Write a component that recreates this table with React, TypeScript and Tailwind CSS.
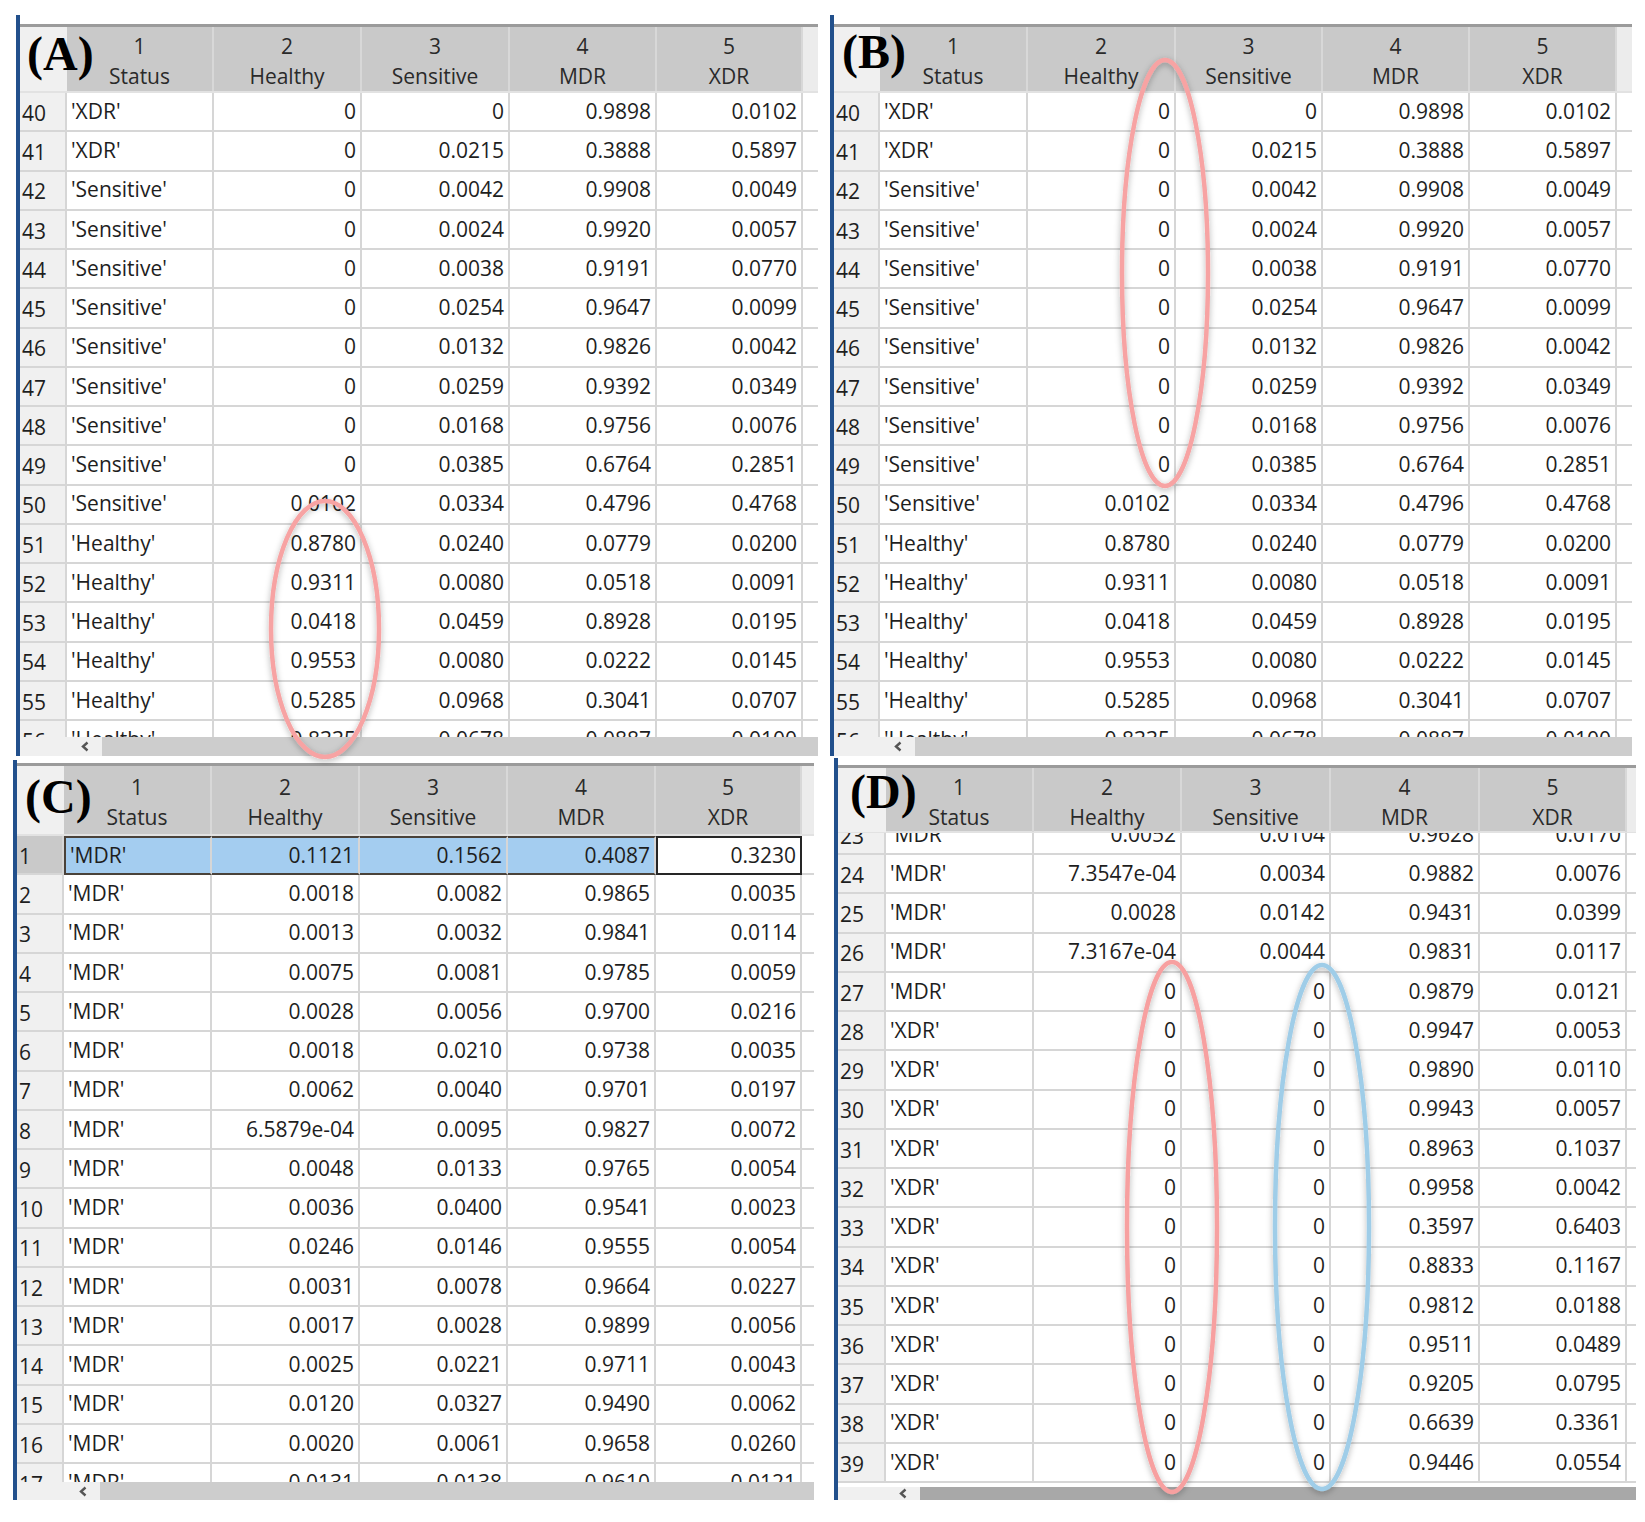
import React from "react";

type Row = string[];

const TOP_ROWS: Row[] = [
  ["40", "'XDR'", "0", "0", "0.9898", "0.0102"],
  ["41", "'XDR'", "0", "0.0215", "0.3888", "0.5897"],
  ["42", "'Sensitive'", "0", "0.0042", "0.9908", "0.0049"],
  ["43", "'Sensitive'", "0", "0.0024", "0.9920", "0.0057"],
  ["44", "'Sensitive'", "0", "0.0038", "0.9191", "0.0770"],
  ["45", "'Sensitive'", "0", "0.0254", "0.9647", "0.0099"],
  ["46", "'Sensitive'", "0", "0.0132", "0.9826", "0.0042"],
  ["47", "'Sensitive'", "0", "0.0259", "0.9392", "0.0349"],
  ["48", "'Sensitive'", "0", "0.0168", "0.9756", "0.0076"],
  ["49", "'Sensitive'", "0", "0.0385", "0.6764", "0.2851"],
  ["50", "'Sensitive'", "0.0102", "0.0334", "0.4796", "0.4768"],
  ["51", "'Healthy'", "0.8780", "0.0240", "0.0779", "0.0200"],
  ["52", "'Healthy'", "0.9311", "0.0080", "0.0518", "0.0091"],
  ["53", "'Healthy'", "0.0418", "0.0459", "0.8928", "0.0195"],
  ["54", "'Healthy'", "0.9553", "0.0080", "0.0222", "0.0145"],
  ["55", "'Healthy'", "0.5285", "0.0968", "0.3041", "0.0707"],
  ["56", "'Healthy'", "0.8335", "0.0678", "0.0887", "0.0100"],
];

const C_ROWS: Row[] = [
  ["1", "'MDR'", "0.1121", "0.1562", "0.4087", "0.3230"],
  ["2", "'MDR'", "0.0018", "0.0082", "0.9865", "0.0035"],
  ["3", "'MDR'", "0.0013", "0.0032", "0.9841", "0.0114"],
  ["4", "'MDR'", "0.0075", "0.0081", "0.9785", "0.0059"],
  ["5", "'MDR'", "0.0028", "0.0056", "0.9700", "0.0216"],
  ["6", "'MDR'", "0.0018", "0.0210", "0.9738", "0.0035"],
  ["7", "'MDR'", "0.0062", "0.0040", "0.9701", "0.0197"],
  ["8", "'MDR'", "6.5879e-04", "0.0095", "0.9827", "0.0072"],
  ["9", "'MDR'", "0.0048", "0.0133", "0.9765", "0.0054"],
  ["10", "'MDR'", "0.0036", "0.0400", "0.9541", "0.0023"],
  ["11", "'MDR'", "0.0246", "0.0146", "0.9555", "0.0054"],
  ["12", "'MDR'", "0.0031", "0.0078", "0.9664", "0.0227"],
  ["13", "'MDR'", "0.0017", "0.0028", "0.9899", "0.0056"],
  ["14", "'MDR'", "0.0025", "0.0221", "0.9711", "0.0043"],
  ["15", "'MDR'", "0.0120", "0.0327", "0.9490", "0.0062"],
  ["16", "'MDR'", "0.0020", "0.0061", "0.9658", "0.0260"],
  ["17", "'MDR'", "0.0131", "0.0138", "0.9610", "0.0121"],
];

const D_ROWS: Row[] = [
  ["23", "'MDR'", "0.0052", "0.0104", "0.9628", "0.0170"],
  ["24", "'MDR'", "7.3547e-04", "0.0034", "0.9882", "0.0076"],
  ["25", "'MDR'", "0.0028", "0.0142", "0.9431", "0.0399"],
  ["26", "'MDR'", "7.3167e-04", "0.0044", "0.9831", "0.0117"],
  ["27", "'MDR'", "0", "0", "0.9879", "0.0121"],
  ["28", "'XDR'", "0", "0", "0.9947", "0.0053"],
  ["29", "'XDR'", "0", "0", "0.9890", "0.0110"],
  ["30", "'XDR'", "0", "0", "0.9943", "0.0057"],
  ["31", "'XDR'", "0", "0", "0.8963", "0.1037"],
  ["32", "'XDR'", "0", "0", "0.9958", "0.0042"],
  ["33", "'XDR'", "0", "0", "0.3597", "0.6403"],
  ["34", "'XDR'", "0", "0", "0.8833", "0.1167"],
  ["35", "'XDR'", "0", "0", "0.9812", "0.0188"],
  ["36", "'XDR'", "0", "0", "0.9511", "0.0489"],
  ["37", "'XDR'", "0", "0", "0.9205", "0.0795"],
  ["38", "'XDR'", "0", "0", "0.6639", "0.3361"],
  ["39", "'XDR'", "0", "0", "0.9446", "0.0554"],
];

const HEADS = [
  ["1", "Status"],
  ["2", "Healthy"],
  ["3", "Sensitive"],
  ["4", "MDR"],
  ["5", "XDR"],
];

type PanelProps = {
  label: string;
  cols: string;
  rows: Row[];
  outer: string;
  pad: string;
  headH: string;
  labelPos: string;
  bodyH: string;
  shiftFirst?: boolean;
  selected?: number;
  barLeft: string;
  barH: string;
  thumb: string;
  barGap?: string;
};

function Panel(p: PanelProps) {
  return (
    <div className={"flex " + p.outer}>
      <div className="w-[4px] bg-[#22508c]" />
      <div className={p.pad}>
        <div className="h-[3px] bg-[#9b9b9b]" />

        {/* Column header */}
        <div className={"relative grid border-b-2 border-[#e2e2e2] bg-[#c9c9c9] " + p.cols + " " + p.headH}>
          <div className="bg-[#f0f0f0]" />
          {HEADS.map(([n, name]) => (
            <div key={n} className="flex flex-col items-center justify-center border-r-2 border-[#d8d8d8] pt-[4px] text-[21px] leading-[30px] text-[#2a2a2a]">
              <span>{n}</span>
              <span>{name}</span>
            </div>
          ))}
          <div className="bg-[#ececec]" />
          <span className={"absolute font-['Liberation_Serif',serif] text-[48px] font-bold leading-none text-black " + p.labelPos}>
            ({p.label})
          </span>
        </div>

        {/* Rows */}
        <div className={"overflow-hidden " + p.bodyH}>
          {p.rows.map((r, i) => {
            const sel = p.selected === i;
            return (
              <div key={r[0]} className={"grid h-[39.25px] text-[21px] text-[#1e1e1e] " + p.cols + (p.shiftFirst && i === 0 ? " -mt-[17.25px]" : "")}>
                <div className={"flex items-center border-r-2 border-b-2 border-[#d6d6d6] pl-[2px] pt-[4px] " + (sel ? "bg-[#c9c9c9]" : "bg-[#f0f0f0]")}>
                  {r[0]}
                </div>
                {r.slice(1).map((v, j) => {
                  const align = j === 0 ? "justify-start pl-[4px]" : "justify-end pr-[4px]";
                  let cell = "border-r-2 border-b-2 border-[#d6d6d6] bg-white";
                  if (sel && j < 4) cell = "border-y-2 border-r-2 border-y-[#4a423a] border-r-[#d6d6d6] bg-[#a4cdf0]" + (j === 0 ? " border-l-2 border-l-[#4a423a]" : "");
                  if (sel && j === 4) cell = "border-2 border-[#262626] bg-white";
                  return (
                    <div key={j} className={"flex items-center whitespace-nowrap " + align + " " + cell}>
                      {v}
                    </div>
                  );
                })}
                <div className="border-b-2 border-[#d6d6d6] bg-white" />
              </div>
            );
          })}
        </div>

        {/* Horizontal scrollbar */}
        <div className={p.barGap ?? ""} />
        <div className={"flex " + p.barH}>
          <div className={"flex items-center justify-end bg-[#f0f0f0] pr-[13px] " + p.barLeft}>
            <svg width="8" height="11" viewBox="0 0 8 11">
              <path d="M6.5 1.5 L2 5.5 L6.5 9.5" fill="none" stroke="#555" strokeWidth="2.4" />
            </svg>
          </div>
          <div className={"flex-1 " + p.thumb} />
        </div>
      </div>
    </div>
  );
}

export default function App() {
  return (
    <div className="relative h-[1522px] w-[1645px] overflow-hidden bg-white font-['Open_Sans',sans-serif]">
      <div className="flex pt-[15px]">
        <Panel
          label="A"
          cols="grid-cols-[47px_147px_148px_148px_147px_146px_15px]"
          rows={TOP_ROWS}
          outer="ml-[16px]"
          pad="pt-[9px]"
          headH="h-[66px]"
          labelPos="left-[7px] top-[3px]"
          bodyH="h-[644px]"
          barLeft="w-[82px]"
          barH="h-[19px]"
          thumb="bg-[#cdcdcd]"
        />
        <Panel
          label="B"
          cols="grid-cols-[46px_148px_148px_147px_147px_147px_15px]"
          rows={TOP_ROWS}
          outer="ml-[12px]"
          pad="pt-[9px]"
          headH="h-[66px]"
          labelPos="left-[8px] top-[1px]"
          bodyH="h-[644px]"
          barLeft="w-[81px]"
          barH="h-[19px]"
          thumb="bg-[#cdcdcd]"
        />
      </div>
      <div className="mt-[2px] flex items-start">
        <Panel
          label="C"
          cols="grid-cols-[47px_148px_148px_148px_148px_146px_12px]"
          rows={C_ROWS}
          outer="ml-[13px] mt-[2px]"
          pad="pt-[3px]"
          headH="h-[70px]"
          labelPos="left-[8px] top-[7px]"
          bodyH="h-[646px]"
          selected={0}
          barLeft="w-[83px]"
          barH="h-[18px]"
          thumb="bg-[#cdcdcd]"
        />
        <Panel
          label="D"
          cols="grid-cols-[48px_148px_148px_149px_149px_147px_9px]"
          rows={D_ROWS}
          outer="ml-[20px]"
          pad="pt-[7px]"
          headH="h-[65px]"
          labelPos="left-[12px] top-[0px]"
          bodyH="h-[650px]"
          shiftFirst
          barGap="h-[4px]"
          barLeft="w-[82px]"
          barH="h-[13px]"
          thumb="bg-[#a8a8a8]"
        />
      </div>

      {/* Highlight ellipses drawn over the tables */}
      <svg className="pointer-events-none absolute left-0 top-0" width="1645" height="1522" viewBox="0 0 1645 1522">
        <defs>
          <filter id="soft" x="-30%" y="-10%" width="160%" height="120%">
            <feDropShadow dx="0" dy="2" stdDeviation="3" floodColor="#000" floodOpacity="0.3" />
          </filter>
        </defs>
        <g fill="none" strokeWidth="4.5" filter="url(#soft)">
          <ellipse cx="325" cy="629" rx="54" ry="128" stroke="#f7a3a3" />
          <ellipse cx="1165" cy="273" rx="43" ry="213" stroke="#f7a3a3" />
          <ellipse cx="1172" cy="1227" rx="45" ry="265" stroke="#f7a0a0" />
          <ellipse cx="1322" cy="1227" rx="47" ry="262" stroke="#9fcde8" />
        </g>
      </svg>
    </div>
  );
}
